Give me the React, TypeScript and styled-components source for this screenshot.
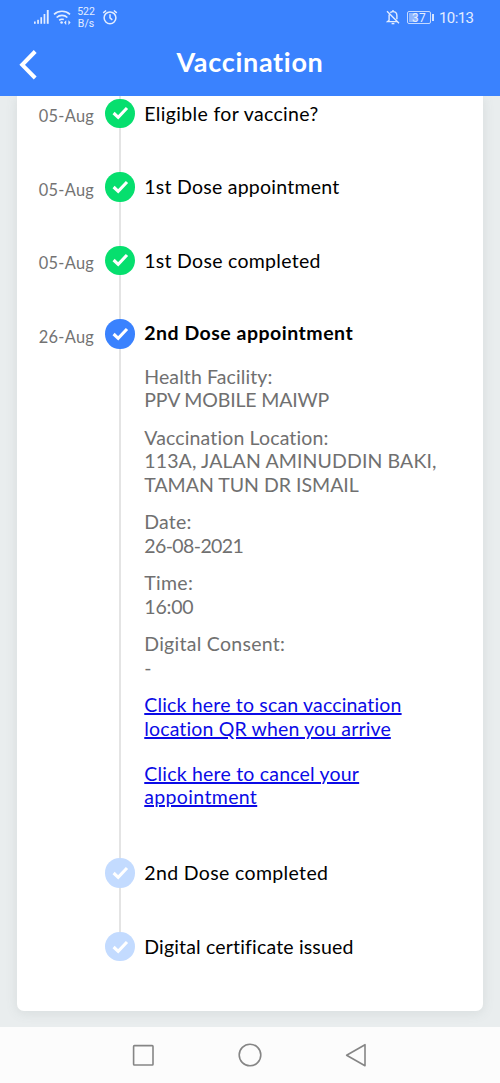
import React from 'react';
import styled, { createGlobalStyle } from 'styled-components';

const GlobalStyle = createGlobalStyle`
  * { box-sizing: border-box; }
  body {
    margin: 0;
    background: #e9edee;
    font-family: Lato, 'Liberation Sans', sans-serif;
  }
`;

const Screen = styled.div`
  display: flex;
  flex-direction: column;
  width: 500px;
  height: 1083px;
  overflow: hidden;
  background: #e9edee;
`;

const Header = styled.header`
  flex: none;
  height: 96px;
  background: #3a82fe;
  color: #fff;
`;

const StatusBar = styled.div`
  display: flex;
  align-items: center;
  justify-content: space-between;
  height: 34px;
  padding: 0 26px 0 33px;
  font-family: Roboto, sans-serif;
  color: #e3edff;
`;

const StatusGroup = styled.div`
  display: flex;
  align-items: center;
`;

const NetworkSpeed = styled.div`
  width: 20px;
  margin: 2px 6px 0 5px;
  font-size: 10.5px;
  line-height: 12px;
  text-align: center;
`;

const Battery = styled.div`
  display: flex;
  align-items: center;
  margin: 0 5px 0 7px;
`;

const BatteryBody = styled.div`
  width: 24px;
  height: 13px;
  border: 1px solid #c4d9ff;
  border-radius: 2px;
  background: linear-gradient(90deg, #8eb6ff 0 8px, transparent 8px);
  background-origin: content-box;
  background-clip: content-box;
  padding: 1px;
  font-size: 12px;
  line-height: 10px;
  text-align: center;
  letter-spacing: 0.2px;
`;

const BatteryTip = styled.div`
  width: 2px;
  height: 7px;
  margin-left: 1px;
  background: #d4e3ff;
`;

const Clock = styled.span`
  width: 35px;
  margin-top: 1px;
  font-size: 15px;
  line-height: 18px;
  letter-spacing: -0.6px;
  white-space: nowrap;
`;

const TitleBar = styled.div`
  display: grid;
  grid-template-columns: 60px 1fr 60px;
  align-items: center;
  height: 62px;
`;

const BackButton = styled.button`
  display: flex;
  padding: 0 0 0 18px;
  border: 0;
  background: none;
  color: #fff;
`;

const Title = styled.h1`
  margin: 0 0 6px;
  font-size: 27px;
  line-height: 32px;
  font-weight: 700;
  letter-spacing: 0.7px;
  text-align: center;
`;

const Content = styled.main`
  flex: 1;
  min-height: 0;
  padding: 0 16.7px 16px;
  overflow: hidden;
`;

const Card = styled.section`
  height: 100%;
  padding-top: 2.6px;
  border-radius: 0 0 7px 7px;
  background: #fff;
  box-shadow: 0 2px 12px rgba(90, 105, 110, 0.13);
`;

const Step = styled.div<{ $height: number }>`
  display: grid;
  grid-template-columns: 88.8px 29.4px 1fr;
  height: ${(p) => p.$height}px;
`;

const StepDate = styled.div`
  padding: 7.4px 0 0 22px;
  font-size: 16.4px;
  line-height: 20px;
  letter-spacing: 0.3px;
  color: #737373;
  white-space: nowrap;
`;

const Rail = styled.div<{ $line: boolean; $first?: boolean }>`
  display: flex;
  flex-direction: column;
  align-items: center;
  margin-top: ${(p) => (p.$first ? '-2.6px' : '0')};

  &::before {
    content: '';
    width: 2px;
    height: ${(p) => (p.$first ? '2.6px' : '0')};
    background: #e4e4e4;
  }

  &::after {
    content: '';
    flex: 1;
    width: 2px;
    background: ${(p) => (p.$line ? '#e4e4e4' : 'transparent')};
  }
`;

const tones = { done: '#06df6e', current: '#3a82fe', pending: '#c3dbff' };
type Tone = keyof typeof tones;

const Badge = styled.span<{ $tone: Tone }>`
  display: flex;
  align-items: center;
  justify-content: center;
  flex: none;
  width: 29.4px;
  height: 29.4px;
  border-radius: 50%;
  background: ${(p) => tones[p.$tone]};
`;

const StepBody = styled.div`
  padding: 3px 0 0 9.4px;
  font-size: 19.5px;
  line-height: 23.5px;
`;

const StepTitle = styled.div<{ $bold?: boolean; $track: number }>`
  font-weight: ${(p) => (p.$bold ? 700 : 400)};
  letter-spacing: ${(p) => p.$track}px;
  margin-top: ${(p) => (p.$bold ? '-1.2px' : '0')};
  color: #000;
  white-space: nowrap;
`;

const Details = styled.div`
  display: flex;
  flex-direction: column;
  gap: 14px;
  padding-top: 20.2px;
`;

const Detail = styled.div`
  color: #707070;
`;

const Line = styled.span<{ $track: number }>`
  display: block;
  height: 23.5px;
  letter-spacing: ${(p) => p.$track}px;
  white-space: nowrap;
`;

const ActionLink = styled.a<{ $spaced?: boolean }>`
  display: block;
  margin-top: ${(p) => (p.$spaced ? '7.2px' : '0')};
  color: #0b0be6;
  text-decoration: underline;
  text-decoration-thickness: 1.6px;
  text-underline-offset: 1.2px;
`;

const NavBar = styled.nav`
  display: flex;
  flex: none;
  align-items: center;
  justify-content: center;
  gap: 82px;
  height: 56px;
  background: #fcfcfc;
`;

const Check = () => (
  <svg width="17" height="14" viewBox="0 0 17 14" fill="none" stroke="#fff" strokeWidth="3.1">
    <path d="M1.6 7 6.2 11.3 15 2" />
  </svg>
);

type Text = [string, number];

const details: Text[][] = [
  [['Health Facility:', 0.1], ['PPV MOBILE MAIWP', -0.17]],
  [
    ['Vaccination Location:', 0.14],
    ['113A, JALAN AMINUDDIN BAKI,', 0.12],
    ['TAMAN TUN DR ISMAIL', 0],
  ],
  [['Date:', 0.2], ['26-08-2021', -0.6]],
  [['Time:', 0.3], ['16:00', -0.2]],
  [['Digital Consent:', 0.27], ['-', 0]],
];

const links: Text[][] = [
  [['Click here to scan vaccination', 0.17], ['location QR when you arrive', 0.14]],
  [['Click here to cancel your', 0.2], ['appointment', 0.35]],
];

interface StepData {
  date?: string;
  title: string;
  track: number;
  tone: Tone;
  height: number;
}

const steps: StepData[] = [
  { date: '05-Aug', title: 'Eligible for vaccine?', track: 0.35, tone: 'done', height: 73.6 },
  { date: '05-Aug', title: '1st Dose appointment', track: 0.25, tone: 'done', height: 73.6 },
  { date: '05-Aug', title: '1st Dose completed', track: 0.28, tone: 'done', height: 73.6 },
  { date: '26-Aug', title: '2nd Dose appointment', track: 0.5, tone: 'current', height: 539 },
  { title: '2nd Dose completed', track: 0.35, tone: 'pending', height: 73.6 },
  { title: 'Digital certificate issued', track: 0.17, tone: 'pending', height: 29.4 },
];

const lines = (items: Text[]) =>
  items.map(([text, track]) => (
    <Line key={text} $track={track}>
      {text}
    </Line>
  ));

export default function App() {
  return (
    <Screen>
      <GlobalStyle />
      <Header>
        <StatusBar>
          <StatusGroup>
            <svg width="17" height="16" viewBox="0 0 17 16" fill="currentColor">
              <rect x="1" y="12.5" width="1.7" height="2.3" />
              <rect x="4.2" y="10.8" width="1.7" height="4" />
              <rect x="7.4" y="8.2" width="1.7" height="6.6" />
              <rect x="10.6" y="5" width="1.7" height="9.8" />
              <rect x="13.8" y="1" width="1.9" height="13.8" />
            </svg>
            <svg width="18" height="16" viewBox="0 0 18 16" fill="none" stroke="currentColor" strokeWidth="1.6" style={{ marginLeft: 3 }}>
              <path d="M1 5.3a12 12 0 0 1 16 0M3.6 8.5a8 8 0 0 1 10.8 0M6.2 11.4a4.3 4.3 0 0 1 4.6-.8" />
              <circle cx="8.6" cy="13.5" r="1.3" fill="currentColor" stroke="none" />
              <path d="M11 13.6l2.2-2.4v4.8zM17.6 13.6l-2.2-2.4v4.8z" fill="currentColor" stroke="none" />
            </svg>
            <NetworkSpeed>
              522
              <br />
              B/s
            </NetworkSpeed>
            <svg width="16" height="16" viewBox="0 0 16 16" fill="none" stroke="currentColor" strokeWidth="1.5">
              <circle cx="8" cy="8.8" r="5.9" />
              <path d="M8 5.2v3.6l2.3 2.1M1.2 3.9 4.1 1.5M14.8 3.9l-2.9-2.4" />
            </svg>
          </StatusGroup>
          <StatusGroup>
            <svg width="14" height="16" viewBox="0 0 14 16" fill="none" stroke="currentColor" strokeWidth="1.4">
              <path d="M1 2.2 13 14.2M4.3 3.6C5 3 5.8 2.6 7 2.6c2.5 0 3.9 1.8 3.9 4.1v3.6M3.1 5.4v5.9L1.6 12.6H11M7 2.6V1" />
              <path d="M5.6 14.6h2.8" />
            </svg>
            <Battery>
              <BatteryBody>37</BatteryBody>
              <BatteryTip />
            </Battery>
            <Clock>10:13</Clock>
          </StatusGroup>
        </StatusBar>
        <TitleBar>
          <BackButton aria-label="Back">
            <svg width="20" height="30" viewBox="0 0 20 30" fill="none" stroke="currentColor" strokeWidth="4">
              <path d="M17.2 1.5 4.2 14.8 17.2 28" />
            </svg>
          </BackButton>
          <Title>Vaccination</Title>
        </TitleBar>
      </Header>
      <Content>
        <Card>
          {steps.map((step, i) => (
            <Step key={step.title} $height={step.height}>
              <StepDate>{step.date}</StepDate>
              <Rail $first={i === 0} $line={i < steps.length - 1}>
                <Badge $tone={step.tone}>
                  <Check />
                </Badge>
              </Rail>
              <StepBody>
                <StepTitle $bold={step.tone === 'current'} $track={step.track}>
                  {step.title}
                </StepTitle>
                {step.tone === 'current' && (
                  <Details>
                    {details.map((d) => (
                      <Detail key={d[0][0]}>{lines(d)}</Detail>
                    ))}
                    {links.map((l, n) => (
                      <ActionLink key={l[0][0]} href="#" $spaced={n > 0}>
                        {lines(l)}
                      </ActionLink>
                    ))}
                  </Details>
                )}
              </StepBody>
            </Step>
          ))}
        </Card>
      </Content>
      <NavBar>
        <svg width="24" height="24" viewBox="0 0 24 24" fill="none" stroke="#858585" strokeWidth="1.6">
          <rect x="1.6" y="2.6" width="19.4" height="19.4" rx="0.8" />
        </svg>
        <svg width="24" height="24" viewBox="0 0 24 24" fill="none" stroke="#858585" strokeWidth="1.6">
          <circle cx="12" cy="12" r="10.8" />
        </svg>
        <svg width="24" height="24" viewBox="0 0 24 24" fill="none" stroke="#858585" strokeWidth="1.6" strokeLinejoin="round">
          <path d="M2.6 12.2 21 1.7v21z" />
        </svg>
      </NavBar>
    </Screen>
  );
}
